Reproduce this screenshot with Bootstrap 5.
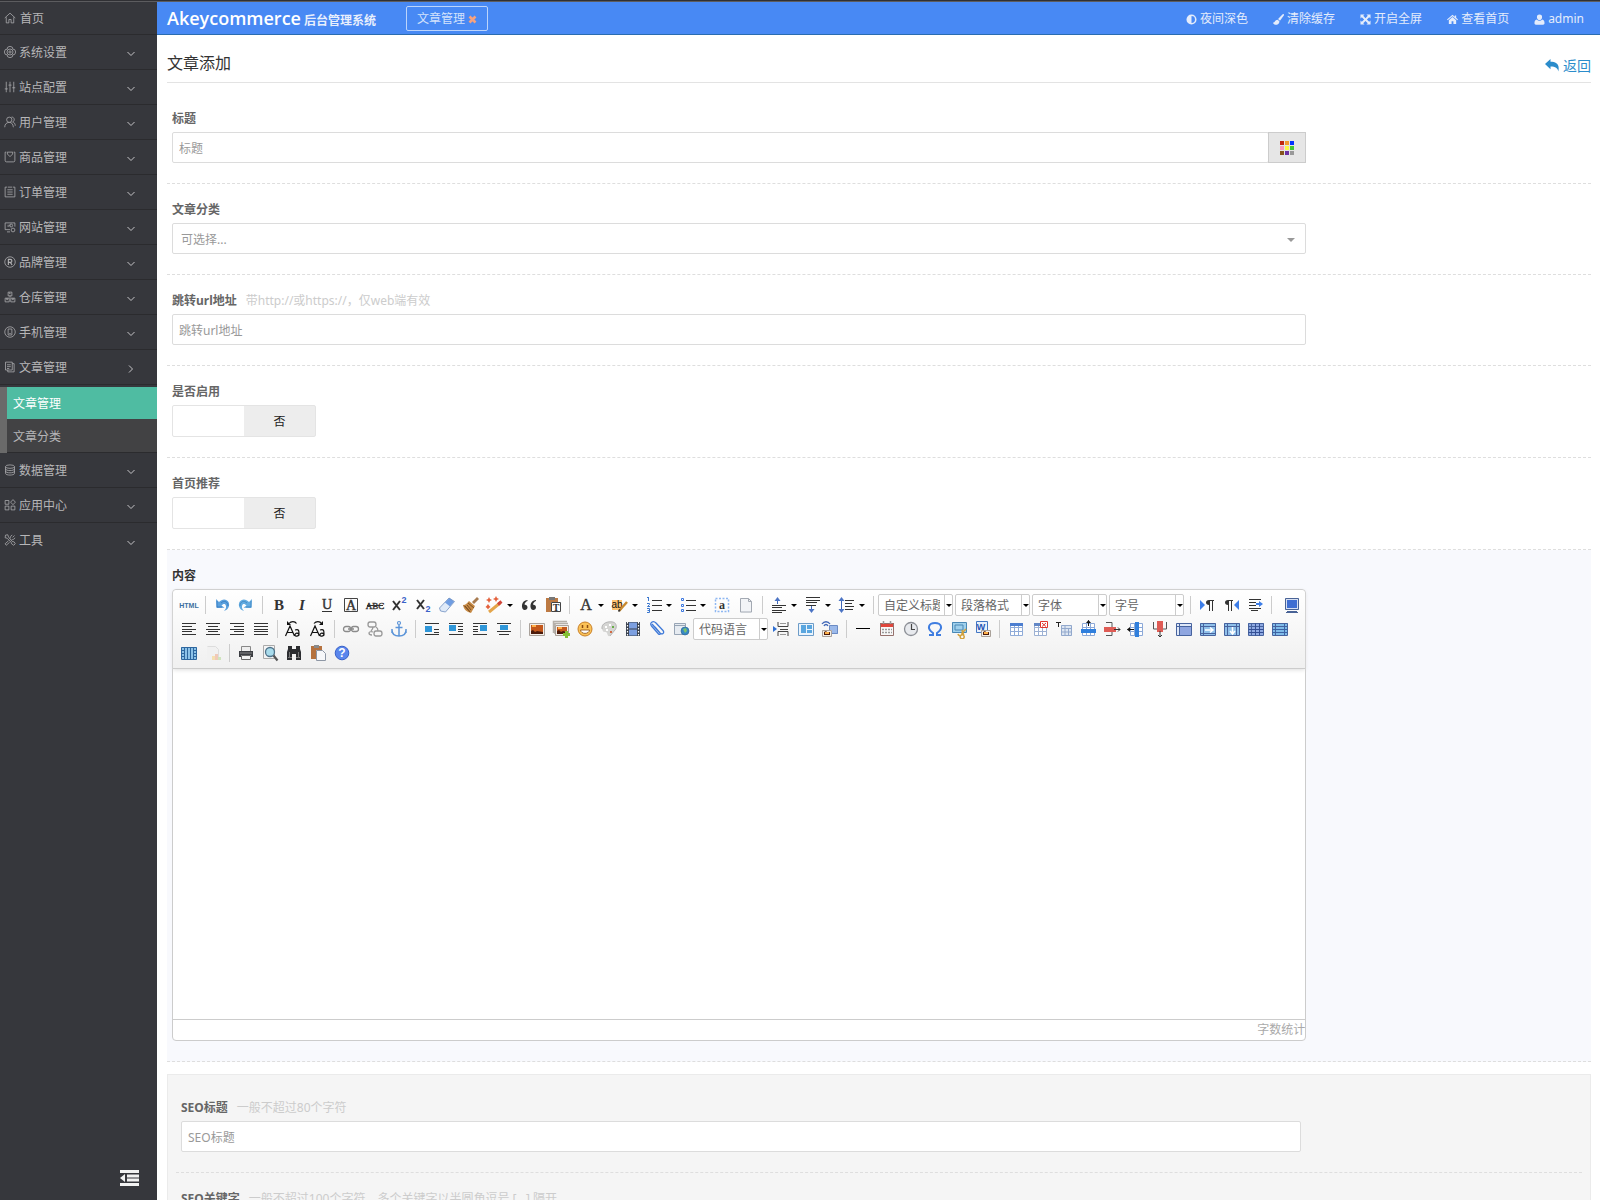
<!DOCTYPE html>
<html lang="zh-CN">
<head>
<meta charset="utf-8">
<meta name="viewport" content="width=device-width, initial-scale=1">
<title>Akeycommerce 后台管理系统</title>
<link href="https://cdn.jsdelivr.net/npm/bootstrap@5.3.0/dist/css/bootstrap.min.css" rel="stylesheet">
<style>
body { font: 12px/18px "Noto Sans", "Noto Sans CJK SC", sans-serif; color: #666; background: #fff; }
a { text-decoration: none; }
.shell { border-top: 1px solid #303034; }
.shell-body { border-top: 1px solid #5c5c5f; min-height: 0; }

.side { width: 157px; background: #36373c; padding-bottom: 12px; }
.side-link { height: 35px; padding: 1px 22px 0 4px; color: #b6b6b8; border-bottom: 1px solid #2b2b2e; gap: 3px; }
.side-link:hover { color: #fff; }
.side-home { height: 33px; gap: 4px; padding-top: 2px; }
.side-link svg { width: 12px; height: 12px; margin-bottom: 2px; fill: none; stroke: #b2b2b4; }
.side-link .chev { width: 8px; height: 8px; margin: 3px 0 0 auto; stroke: #c4c4c6; }
.side li:last-child > .side-link { border-bottom: 0; }
.side-sub { margin-top: 2px; border-left: 7px solid #6a6a6a; }
.side-sub a { height: 34px; padding: 2px 0 0 6px; color: #b6b6b8; background: #424244; border-bottom: 1px solid #2b2b2e; }
.side-sub a.on { height: 32px; background: #4fbca2; color: #fff; border: 0; }
.side-fold { padding: 0; margin-right: 18px; }

.top { height: 33px; background: #4889f4; border-bottom: 1px solid #2a6cb0; padding: 0 16px 0 10px; color: #e8effc; }
.brand-name { font-family: "Open Sans", "Noto Sans", sans-serif; font-size: 18px; font-weight: 600; color: #fff; }
.brand-sub { padding-top: 6px; margin-left: 3px; }
.tab-tag { height: 25px; border: 1px solid #bcd4fb; border-radius: 2px; color: #d3e2fc; padding: 2px 10px 0; margin-left: 30px; gap: 3px; background: none; }
.top-nav { gap: 25px; padding-top: 2px; }
.top-link { color: #e4ecfb; gap: 3px; }
.top-link svg { width: 11px; height: 11px; fill: currentColor; }

.page-main { padding: 0 9px 0 10px; overflow-y: auto; scrollbar-width: none; }
.page-head { height: 48px; border-bottom: 1px solid #e3e3e3; margin-bottom: 10px; }
.page-head h1 { font-size: 16px; line-height: 24px; color: #333; padding-top: 16px; }
.back-link { font-size: 14px; color: #2b8ccb; padding-top: 14px; gap: 4px; }
.field { border-bottom: 1px dashed #dedede; padding: 17px 0 20px; }
.field-in { width: 80%; padding-left: 5px; }
.field-label { font-weight: 700; color: #666; display: block; margin-bottom: 4px; }
.field-hint { font-weight: 400; color: #ccc; margin-left: 9px; }
.box { display: block; width: 100%; height: 31px; border: 1px solid #dcdcdc; border-radius: 2px; padding: 2px 6px 0; background: #fff; color: #999; font-size: 12px; }
.box::placeholder { color: #999; opacity: 1; }
.box-select { appearance: none; padding: 2px 8px 0; }
.arrow-host { position: relative; }
.box-arrow { position: absolute; right: 11px; top: 15px; border: 4px solid transparent; border-top-color: #999; border-bottom: 0; pointer-events: none; }
.swatch-btn { width: 38px; background: #e6e6e6; border: 1px solid #ccc; margin-left: -1px; flex: none; }
.toggle { width: 144px; height: 32px; border: 1px solid #e4e4e4; border-radius: 2px; background: linear-gradient(90deg, #fff 50%, #ededed 50%); color: #222; padding: 2px 0 0; }
.toggle span { width: 50%; }

.field-rich { background: #f8f9fd; }
.field-rich .field-label { color: #333; }
.ed { border: 1px solid #ccc; border-radius: 4px; background: #fff; }
.ed-bar { padding: 3px 1px 3px 4px; border-bottom: 1px solid #ccc; background: linear-gradient(#fff, #f0f0f0); border-radius: 4px 4px 0 0; box-shadow: 0 1px 4px #ddd; }
.ed-row { height: 24px; }
.ed-btn { width: 24px; height: 24px; padding: 2px; border: 0; background: none; display: block; flex: none; }
.ed-btn.drop { width: 34px; display: flex; align-items: center; }
.ed-btn svg { width: 20px; height: 20px; display: block; flex: none; }
.ed-btn.drop::after, .ed-sel::after { content: ""; border: 3px solid transparent; border-top-color: #000; border-bottom: 0; }
.ed-btn.drop::after { margin-left: 2px; }
.ed-sep { width: 1px; height: 18px; background: #ccc; margin: 0 4px; flex: none; }
.ed-sel { position: relative; width: 75px; height: 22px; margin-right: 2px; border: 1px solid #ccc; border-radius: 2px; background: #fff; flex: none; }
.ed-sel select { width: 66px; height: 20px; appearance: none; border: 0; border-right: 1px solid #ccc; background: none; color: #666; padding: 2px 4px 0 5px; display: block; }
.ed-sel::after { position: absolute; right: 0; top: 9px; pointer-events: none; }
.ed-text { display: block; width: 100%; height: 350px; border: 0; resize: none; outline: 0; background: none; }
.ed-foot { height: 21px; border-top: 1px solid #ccc; color: #aaa; line-height: 20px; }
.seo { margin-top: 12px; padding: 7px 8px; border: 1px solid #ebebeb; background: #f5f5f5; }
</style>
</head>
<body>
<div class="shell vh-100 d-flex flex-column overflow-hidden">
<div class="shell-body d-flex flex-grow-1">
  <aside class="side d-flex flex-column flex-shrink-0">
    <ul class="list-unstyled m-0" id="menu"></ul>
    <button class="side-fold btn border-0 mt-auto ms-auto" aria-label="收起菜单"><svg width="19" height="16" viewBox="0 0 19 16"><path fill="#f2f2f2" d="M0 0h19v3H0zM7 4.500h12v3H7zM7 8.500h12v3H7zM0 13h19v3H0zM5 4v8L0 8z"/></svg></button>
  </aside>
  <div class="d-flex flex-column flex-grow-1 overflow-hidden">
    <header class="top d-flex align-items-center flex-shrink-0">
      <span class="brand-name">Akeycommerce</span><b class="brand-sub">后台管理系统</b>
      <button class="tab-tag d-flex align-items-center">文章管理<svg width="9" height="9" viewBox="0 0 9 9"><path d="M1.500 1.500l6 6m0-6l-6 6" stroke="#f6a27f" stroke-width="2.600"/></svg></button>
      <nav class="top-nav d-flex ms-auto">
        <a class="top-link d-flex align-items-center" href="#"><svg viewBox="0 0 12 12"><path fill-rule="evenodd" d="M6 .5a5.500 5.500 0 100 11 5.500 5.500 0 000-11zM6 2.200v7.600a3.800 3.800 0 000-7.600z"/></svg>夜间深色</a>
        <a class="top-link d-flex align-items-center" href="#"><svg viewBox="0 0 12 12"><path d="M11.700.3c.6.6.2 1.400-.3 2L7.600 7.300 5.500 5.500 10 .7c.5-.5 1.200-.9 1.700-.4zM5 6.200l2 1.800c.1 2.500-2.300 4-4.500 3.800C1.200 11.600.4 10.600 0 9.200c2 .6 1.800-2.700 5-3z"/></svg>清除缓存</a>
        <a class="top-link d-flex align-items-center" href="#"><svg viewBox="0 0 12 12"><path d="M.5.500H5L3.500 2 6 4.500 8.500 2 7 .500h4.500V5L10 3.500 7.500 6 10 8.500 11.500 7v4.500H7L8.500 10 6 7.500 3.500 10 5 11.500H.500V7L2 8.500 4.500 6 2 3.500.500 5z"/></svg>开启全屏</a>
        <a class="top-link d-flex align-items-center" href="#"><svg viewBox="0 0 12 12"><path d="M6 .8l2.500 2.100V1.500H10v2.700l2 1.700-.7.800L6 2.400.7 6.700 0 5.900zM6 3.400l4 3.300V11H7V8H5v3H2V6.700z"/></svg>查看首页</a>
        <a class="top-link d-flex align-items-center" href="#"><svg viewBox="0 0 12 12"><path d="M6 .5a2.800 2.800 0 012.800 3C8.800 5.400 7.500 6.700 6 6.700S3.200 5.400 3.200 3.500A2.800 2.800 0 016 .5zM3 6c1.600 2 4.400 2 6 0 1.800.3 2.500 2 2.500 4 0 1-.7 1.600-1.500 1.600H2c-.8 0-1.500-.6-1.500-1.600 0-2 .7-3.700 2.500-4z"/></svg>admin</a>
      </nav>
    </header>
    <main class="page-main flex-grow-1">
      <div class="page-head d-flex justify-content-between">
        <h1 class="m-0 fw-normal">文章添加</h1>
        <a class="back-link d-flex align-items-center" href="#"><svg width="14" height="13" viewBox="0 0 14 13"><path fill="#2b8ccb" d="M5.500 0v2.800C11 2.800 15 5 13.300 12.500 12.800 9 10.500 7.500 5.500 7.500v2.800L0 5z"/></svg>返回</a>
      </div>
      <form>
        <div class="field"><div class="field-in">
          <label class="field-label" for="f-title">标题</label>
          <div class="d-flex"><input class="box" id="f-title" placeholder="标题">
            <button type="button" class="swatch-btn d-flex align-items-center justify-content-center p-0" aria-label="标题颜色"><svg width="14" height="14" viewBox="0 0 14 14" shape-rendering="crispEdges"><path fill="#c1270f" d="M0 0h4v4H0z"/><path fill="#f39a2e" d="M5 0h4v4H5z"/><path fill="#0433ff" d="M10 0h4v4h-4z"/><path fill="#f99bbd" d="M0 5h4v4H0z"/><path fill="#fbfb44" d="M5 5h4v4H5z"/><path fill="#45c830" d="M10 5h4v4h-4z"/><path fill="#86551d" d="M0 10h4v4H0z"/><path fill="#6c32a5" d="M5 10h4v4H5z"/><path fill="#999" d="M10 10h4v4h-4z"/></svg></button>
          </div>
        </div></div>
        <div class="field"><div class="field-in">
          <label class="field-label" for="f-cat">文章分类</label>
          <div class="arrow-host"><select class="box box-select" id="f-cat"><option>可选择...</option></select><span class="box-arrow"></span></div>
        </div></div>
        <div class="field"><div class="field-in">
          <label class="field-label" for="f-url">跳转url地址<span class="field-hint">带http://或https://，仅web端有效</span></label>
          <input class="box" id="f-url" placeholder="跳转url地址">
        </div></div>
        <div class="field"><div class="field-in">
          <label class="field-label" for="f-on">是否启用</label>
          <button type="button" id="f-on" class="toggle d-flex align-items-center justify-content-end"><span>否</span></button>
        </div></div>
        <div class="field"><div class="field-in">
          <label class="field-label" for="f-home">首页推荐</label>
          <button type="button" id="f-home" class="toggle d-flex align-items-center justify-content-end"><span>否</span></button>
        </div></div>
        <div class="field field-rich"><div class="field-in">
          <label class="field-label" for="f-body">内容</label>
          <div class="ed">
            <div class="ed-bar" id="edbar"></div>
            <textarea class="ed-text" id="f-body"></textarea>
            <div class="ed-foot text-end">字数统计</div>
          </div>
        </div></div>
        <div class="seo">
          <div class="field"><div class="field-in">
            <label class="field-label" for="f-st">SEO标题<span class="field-hint">一般不超过80个字符</span></label>
            <input class="box" id="f-st" placeholder="SEO标题">
          </div></div>
          <div class="field"><div class="field-in">
            <label class="field-label" for="f-sk">SEO关键字<span class="field-hint">一般不超过100个字符，多个关键字以半圆角逗号 [ , ] 隔开</span></label>
            <input class="box" id="f-sk" placeholder="SEO关键字">
          </div></div>
        </div>
      </form>
    </main>
  </div>
</div>
</div>

<script src="https://cdn.jsdelivr.net/npm/bootstrap@5.3.0/dist/js/bootstrap.bundle.min.js"></script>
<script>
/* Side menu: name, icon drawing on a 16-unit grid, optional children */
const menu = [
  ['首页', '<path d="M1 8l7-6.500L15 8M3 7v7.500h3.500V10h3v4.500H13V7"/>'],
  ['系统设置', '<path d="M5 1.500l3-1 3 1 .8 2.700 2.700.8 1 3-1 3-2.700.8L11 14.500l-3 1-3-1-.8-2.700-2.700-.8-1-3 1-3 2.700-.8z"/><circle cx="8" cy="8" r="4"/><circle cx="8" cy="8" r="1.500"/>'],
  ['站点配置', '<path d="M3 1v9M3 13v2M8 1v2M8 6v9M13 1v7M13 11v4M1 10.500h4M6 5.500h4M11 9h4M3 10v3M8 3v3M13 8v3"/>'],
  ['用户管理', '<circle cx="7" cy="5" r="3.500"/><path d="M1 15c0-4 2-6 5.500-6.500M7 8.500c3.500 0 5 2.500 5.500 6.500M10 1.500c4-.5 5 5 1.500 6.500 2 .5 3.500 2 3.500 5"/>'],
  ['商品管理', '<path d="M3 1.500H1.500v11q0 2 2 2h9q2 0 2-2v-11H13M4.500 1v3l3.500 3.500L11.500 4V1M5 1.500h6"/>'],
  ['订单管理', '<path d="M4 1.500H1.500v13h13v-13H12M5 1.500h6M4.500 5h7M4.500 8h7M4.500 11h7"/>'],
  ['网站管理', '<path d="M8 11.500H1.500v-9h13v5M4 14.500h4M5.500 5v3M8 5v2"/><circle cx="9.500" cy="6" r="2"/><circle cx="12" cy="12" r="2.500"/>'],
  ['品牌管理', '<circle cx="8" cy="8" r="7"/><path stroke-width="1.500" d="M5.800 12V4.500h2.700q2 0 2 2t-2 2H6M8.500 8.500l2.300 3.500"/>'],
  ['仓库管理', '<path d="M5.500 1.500h5v5h-5zM1.500 9.500h5.500v5H1.500zM9 9.500h5.500v5H9zM8 6v3M3.500 9.500v2h1.500v-2M11 9.500v2h1.500v-2M7.300 2v1.500h1.500"/>'],
  ['手机管理', '<circle cx="8" cy="8" r="7"/><path d="M5.500 4h5v8h-5zM7 10h2"/>'],
  ['文章管理', '<path d="M2 1.500h9v10.500H2zM11 3.500h2.500v11H5V12M4 5h5M4 7.500h5M4 10h3"/>', ['文章管理', '文章分类']],
  ['数据管理', '<ellipse cx="8" cy="3.500" rx="6" ry="2.300"/><path d="M2 3.500v9c0 3 12 3 12 0v-9M2 6.500c0 3 12 3 12 0M2 9.500c0 3 12 3 12 0"/>'],
  ['应用中心', '<path d="M1.500 2h5v5h-5zM1.500 9.500h5v5h-5zM9.500 9.500h5v5h-5zM12 .8L15.200 4.200 12 7.600 8.800 4.200z"/>'],
  ['工具', '<path d="M2 1.500l3-.5 1 3 5 6 2.500.5L15 13l-2 2-3-2-.5-2L4 5.500 1.500 5zM14 2l-2.500 2.500M11 1.500c-3 1-2 3-3 4.500M14.500 5c-1 3-3 2-4.500 3M6 9l-4.500 4 1.500 2 4.500-4"/>']
];
document.getElementById('menu').innerHTML = menu.map(([name, art, kids], i) =>
  `<li><a href="#" class="side-link d-flex align-items-center ${i ? '' : 'side-home'}"><svg viewBox="0 0 16 16">${art}</svg>${name}` +
  (i ? `<svg class="chev" viewBox="0 0 8 8"><path d="${kids ? 'M2 .5L5.500 4 2 7.500' : 'M.5 2L4 5.500 7.500 2'}"/></svg>` : '') + '</a>' +
  (kids ? '<div class="side-sub">' + kids.map((k, n) => `<a href="#" class="d-flex align-items-center ${n ? '' : 'on'}">${k}</a>`).join('') + '</div>' : '') + '</li>').join('');

/* Editor icons, drawn on a 20-unit grid */
const P = (d, c = '#333', w = 1) => `<path fill="none" stroke="${c}" stroke-width="${w}" d="${d}"/>`;
const F = (d, c = '#333') => `<path fill="${c}" d="${d}"/>`;
const T = (s, x, y, size, extra = '', c = '#333') => `<text x="${x}" y="${y}" font-size="${size}" fill="${c}" text-anchor="middle" ${extra}>${s}</text>`;
const SERIF = 'font-family="Liberation Serif, serif" font-weight="700"';
const THIN = 'font-family="Liberation Serif, serif" stroke="#333" stroke-width=".4"';
const SANS = 'font-family="Liberation Sans, sans-serif" font-weight="700"';
const bars = a => P(a.map(([y, x1, x2]) => `M${x1} ${y}.5H${x2}`).join(''));
const grid = c => F('M4 5h12v11H4z', '#fff') + P('M4.500 4.500h12v12h-12zM4.500 8.500h12M4.500 12.500h12M8.500 4.500v12M12.500 4.500v12', c);
const frame = f => F('M2 4h16v12H2z', f) + P('M2.500 4.500h15v12h-15zM5.500 4.500v12M2.500 7.500h15', '#47639e');
const photo = (x, y, w, h) => F(`M${x} ${y}h${w}v${h}h-${w}z`, '#f4efe9') + F(`M${x + 2} ${y + 2}h${w - 4}v${h - 4}h-${w - 4}z`, '#c4581c') + F(`M${x + 2} ${y + h - 2}v-3l2-1 2 2 2-1 ${w - 10} 1v2z`, '#4b1a0a') + F(`M${x + 3} ${y + 2}h4v2h-4z`, '#ffb14a') + P(`M${x}.5 ${y}.5h${w - 1}v${h - 1}h-${w - 1}z`, '#a9a19a');
const art = {
  html: T('HTML', 10, 13, 7, SANS, '#3b6ea0'),
  undo: F('M4 4l.500 9 8-.2-3-2.300c1.500-2 4-2.500 4.500.500.3 2-.5 3.500-2 5 5-1.500 6-6 4.500-9-2-3.500-6.500-3.500-9.500 0z', '#5ba1dd') + P('M5 6v6h5M9 8c3-3 7-1.500 7 3', '#2f74bb', .7),
  redo: F('M16 4l-.5 9-8-.2 3-2.300c-1.500-2-4-2.500-4.500.500-.3 2 .5 3.500 2 5-5-1.500-6-6-4.500-9 2-3.500 6.500-3.500 9.500 0z', '#62abe0') + P('M15 6v6h-5M11 8C8 5 4 6.500 4 11', '#3b80bd', .7),
  bold: T('B', 10, 15, 15, SERIF), ital: T('I', 9, 15, 15, SERIF + ' font-style="italic"'),
  under: T('U', 10, 14, 14, THIN) + P('M5 16.500h10'),
  boxed: T('A', 10, 15, 14, THIN) + P('M3.500 3.500h13v13h-13z', '#444'),
  strike: T('ABC', 10, 14, 9, THIN) + P('M2 10.500h16'),
  sup: P('M4 6l7 9M11 6l-7 9', '#333', 2) + T('2', 15, 8, 9, SANS, '#3a62c8'),
  sub: P('M4 5l7 9M11 5l-7 9', '#333', 2) + T('2', 15, 17, 9, SANS, '#3a62c8'),
  eraser: F('M2.500 13L12 3l5.500 3.500L8.500 17l-5-1z', '#dfeaf8') + F('M8 7.500L12.500 3l4.500 3.500-4 5z', '#6f9de2') + P('M2.500 13L12 3l5.500 3.500L8.500 17l-5-1z', '#6f8fc0', .8),
  broom: F('M16 2l2 2-5 5-2-2z', '#a77b50') + F('M8 6l6 5-4 7C6 17 3 15 2 10c3 0 4-2 6-4z', '#c78a45') + P('M7 8l6 5M4 11l5 6M6 10l4 5M3 10.500l5 5', '#744a20', .9),
  wand: P('M4 17L15 8', '#e4a54a', 3) + P('M13 9.500l3.500-3', '#d0453b', 3) + F('M4 2l1 2 2 1-2 1-1 2-1-2-2-1 2-1zM11 1l1 2 2 1-2 1-1 2-1-2-2-1 2-1zM3 9l1 1.500L5.500 12 4 13l-1 1.500L2 13 .5 12 2 10.500z', '#e4613c'),
  quote: F('M8.500 5C2 5 1.500 14.500 5.500 15c3.500.3 4.500-5 0-5.500C5.500 8 7 6.500 8.500 6zM17 5c-6.500 0-7 9.500-3 10 3.500.3 4.500-5 0-5.500C14 8 15.500 6.500 17 6z'),
  pasteT: F('M3 3h12v14H3z', '#bd7a43') + F('M6 2h6v3H6z', '#777') + F('M8 7h10v10H8z', '#fff') + P('M8.500 7.500h9v9h-9z', '#444') + T('T', 13, 16, 10, SERIF),
  fore: T('A', 10, 15, 16, THIN),
  back: F('M2 5h10v10H2z', '#ffc370') + T('ab', 7, 13, 10, 'font-family="Liberation Sans, sans-serif"', '#111') + P('M9 16l8-9', '#c98a2e', 2.500) + P('M8.500 16.500l1.500-2', '#333', 1.500),
  ol: P('M8 5.500h10M8 10.500h10M8 15.500h10') + P('M4.500 2v4M3 2.500h2M3 8.500h2.500v1L3.500 11.500h2.500M3 13.500h2.500v4H3M3.500 15.500H5', '#3c78cf'),
  ul: P('M8 5.500h10M8 10.500h10M8 15.500h10') + P('M3.500 3.500h2v2h-2zM3.500 9.500h2v2h-2zM3.500 14.500h2v2h-2z', '#3c78e0'),
  selA: P('M3.500 3.500h13v13h-13z', '#8fb8f2', 1.500).replace('/>', ' stroke-dasharray="2 1.500"/>') + T('a', 10, 14, 12, SERIF),
  blank: F('M4 3h9l3 3v12H4z', '#f2f4f7') + P('M4.500 3.500h8l3 3v10.500h-11zM12.500 3.500v3h3', '#a3a9b2'),
  spTop: bars([[10, 3, 17], [12, 3, 13], [15, 3, 17], [17, 3, 13]]) + P('M8.500 3v6', '#3f66b5') + F('M5.500 6l3-4 3 4z', '#4b74c4'),
  spBot: bars([[2, 3, 17], [5, 3, 17], [7, 3, 14], [10, 3, 13]]) + P('M8.500 11v5', '#3f66b5') + F('M5.500 14l3 4 3-4z', '#4b74c4'),
  lineH: bars([[5, 8, 17], [8, 8, 15], [11, 8, 17], [14, 8, 16]]) + P('M4.500 4v12', '#3f66b5') + F('M1.500 6l3-4 3 4zM1.500 14l3 4 3-4z', '#4b74c4'),
  ltr: F('M3 5l5 5-5 5z', '#3c7de8') + F('M17 5H12c-4 0-4 5 0 5v6h1V6h2v10h1V6h1z'),
  rtl: F('M18 5l-5 5 5 5z', '#3c7de8') + F('M12 5H7c-4 0-4 5 0 5v6h1V6h2v10h1V6h1z'),
  indent: bars([[4, 4, 16], [7, 4, 11], [10, 4, 11], [13, 4, 16], [15, 6, 13]]) + P('M11 9h5', '#3c7de8', 2) + F('M14 6l4 3-4 3z', '#3c7de8'),
  screen: F('M3 3h14v12H3z', '#d7e0f3') + F('M5 5h10v8H5z', '#3f6ed2') + P('M3.500 3.500h13v11h-13zM5 16.500h10M4 17.500h12', '#496396'),
  al: bars([[4, 3, 17], [7, 3, 13], [10, 3, 17], [12, 3, 13], [15, 3, 17]]),
  ac: bars([[4, 3, 17], [7, 5, 15], [10, 3, 17], [12, 5, 15], [15, 3, 17]]),
  ar: bars([[4, 3, 17], [7, 7, 17], [10, 3, 17], [12, 7, 17], [15, 3, 17]]),
  aj: bars([[4, 3, 17], [7, 3, 17], [10, 3, 17], [12, 3, 17], [15, 3, 17]]),
  upper: P('M1.500 17L6 7l4.500 10M3 13.500h6M11 11c4-1 4 0 4 5.500 0-3-4-3-4-.5 0 2 4 1 4-.500M5 4.500c2-2.500 6-2.500 7.500 0', '#111', 1.200) + F('M3 2v4h4z', '#111'),
  lower: P('M2.500 17L7 7l4.500 10M4 13.500h6M12 11c4-1 4 0 4 5.500 0-3-4-3-4-.5 0 2 4 1 4-.500M6 4.500c2-2.500 6-2.500 7.500 0', '#111', 1.200) + F('M15 2v4h-4z', '#111'),
  link: P('M7.500 7.500H5a2.500 2.500 0 000 5h2.500q2 0 2-2.500t-2-2.500zM12.500 7.500H15a2.500 2.500 0 010 5h-2.500q-2 0-2-2.500t2-2.500zM7 10h6', '#8b8b8b', 1.300),
  unlink: P('M5 3h4q2 0 2 2.500T9 8H5Q3 8 3 5.500T5 3zM11 12h4q2 0 2 2.500T15 17h-4q-2 0-2-2.500t2-2.500zM8 8c0 2-1 3-2 4M11 8c2 1 2 2 2 4M8 13c-2-1-4 0-4 1s1 2 3 2', '#999', 1.300),
  anchor: P('M10 6v11M6.500 8.500h7M3 11c0 4 3 6 7 6s7-2 7-6M3 10v4M17 10v4', '#5b94d8', 1.500) + P('M8.500 4a1.500 1.500 0 103 0 1.500 1.500 0 10-3 0z', '#5b94d8', 1.200),
  im1: F('M3 7h7v6H3z', '#2f96d8') + bars([[4, 3, 17], [10, 12, 17], [13, 12, 17], [15, 3, 17]]),
  im2: F('M3 6h7v6H3z', '#2f96d8') + bars([[4, 3, 17], [7, 12, 17], [10, 12, 17], [12, 12, 17], [15, 3, 17]]),
  im3: F('M10 6h7v6h-7z', '#2f96d8') + bars([[4, 3, 17], [7, 3, 8], [10, 3, 8], [12, 3, 8], [15, 3, 17]]),
  im4: F('M6 6h8v5H6z', '#2f96d8') + bars([[4, 3, 17], [12, 3, 17], [15, 5, 15]]),
  pic: photo(2, 4, 16, 13), pics: P('M2.500 14V2.500H16M4 15V4.500h13', '#b5b0aa', 1.500) + photo(4, 6, 14, 11) + P('M15.500 12v7M12 15.500h7', '#84bf35', 3),
  smile: '<circle cx="10" cy="10" r="7" fill="#fbc257" stroke="#c98027"/>' + P('M7.500 6v3M12.500 6v3', '#8a4b12', 1.500) + F('M5.500 11h9c-.5 4.500-8.500 4.500-9 0z', '#fff') + P('M5.500 11h9c-.5 4.500-8.500 4.500-9 0z', '#8a4b12', .8),
  scrawl: F('M3 10C2 4 9 2 14 3c4 1 4 6 2 8l-5 6c-3 1-2-3-4-4-2 0-3 0-4-3z', '#d5d5d3') + P('M3 10C2 4 9 2 14 3c4 1 4 6 2 8l-5 6', '#aaa', .8) + F('M6 7h2v2H6zM10 5h2v2h-2zM7 10h2v2H7z', '#fff') + F('M13 7h2v2h-2z', '#67ad47') + F('M11 12h2v2h-2z', '#d26a43'),
  film: F('M3 3h14v14H3z', '#39414e') + F('M6 3.500h8v6H6zM6 10.500h8v6H6z', '#7c9fe0') + P('M4.500 3v14M15.500 3v14', '#fff', 1.200).replace('/>', ' stroke-dasharray="1.500 1.500"/>'),
  clip: P('M5 5l8 9c2 2 5 0 3-2.500L9 4C6 1 2 4 4.500 7l7 8c1 1 2.500 0 1.500-1L8 8', '#3e79d8', 1.300),
  mapi: F('M3 4h12v12H3z', '#e6ebf1') + P('M3.500 4.500h11v11h-11zM3.500 6.500h11', '#98a5b5') + '<circle cx="14" cy="12" r="4" fill="#3888c4" stroke="#29608f" stroke-width=".6"/>' + F('M12 10l3-1 1 3-2 2z', '#7bc46b'),
  pbreak: P('M6 3v4.500h10V3M6 17v-4.500h10V17M8 10.500h8', '#444') + P('M8 4.500h6M8 15.500h6', '#999') + F('M1 7l4 3-4 3z', '#2f6fd2'),
  tmpl: F('M3 4h15v12H3z', '#eaf4fd') + F('M5 6h5v8H5zM11 6h5v4h-5zM11 11h5v3h-5z', '#5aa6df') + P('M2.500 4.500h15v12h-15z', '#6d9cc8'),
  bgr: F('M9 7h9v8H9z', '#9bb9ea') + P('M9.500 6.500h8v8h-8z', '#6b8bc4') + P('M2 5c2-3 6-3 8 0M4 7c1-2 3-2 4 0', '#4269b8', 1.300) + photo(2, 11, 10, 7),
  hr: P('M3 9.500h14', '#000'),
  cal: F('M3 4h14v13H3z', '#f8f8f8') + F('M3 4h14v4H3z', '#e0463c') + P('M3.500 4.500h13v12h-13z', '#96716d') + P('M5 10.500h10M5 13.500h10', '#9a9a9a', 1.500).replace('/>', ' stroke-dasharray="2 1"/>') + P('M6.500 2v3M13.500 2v3', '#999', 1.500),
  clock: '<circle cx="10" cy="10" r="6.500" fill="#e8eaee" stroke="#8c8f96" stroke-width="1.300"/>' + P('M10.500 5v5.500H14', '#444', 1.200),
  omega: P('M4 16h4v-2C1 9 4 4 10 4s9 5 2 10v2h4', '#3f7de0', 2),
  snap: F('M3 3h14v11H3z', '#9fd0ec') + P('M3.500 3.500h14v10h-14zM6 6h8v5H6z', '#4a88b5') + P('M9 15a2 2 0 104-1l4-4M14 16a2 2 0 101 1l-2-6', '#d2a13b', 1.500),
  word: F('M3 2h12v12H3z', '#e8f0fb') + P('M3.500 2.500h11v11h-11z', '#4377c4') + T('W', 8, 11, 9, SANS, '#1f55b5') + photo(8, 11, 10, 7),
  tbl: grid('#8fabd8') + F('M4 4h13v3H4z', '#4c7ed0'),
  tdel: grid('#9db1d3') + F('M4 4h13v3H4z', '#6287c6') + F('M10 2h8v7h-8z', '#fff') + P('M10.500 2.500h7v6h-7zM12 4l4 3.500M16 4l-4 3.500', '#e0352c'),
  tt: F('M7 6h11v11H7z', '#dde6f2') + P('M7.500 6.500h10v10h-10zM7.500 9.500h10M7.500 13h10M11 6.500v10M14.500 9v7.500', '#92a8cc') + P('M2 3.500h5M4.500 3v5', '#222'),
  rowi: grid('#8ca9d8') + F('M3 10h15v4H3z', '#2f7fdd') + P('M10.500 7V1.500', '#111') + F('M8 4l2.500-3L13 4z', '#111'),
  rowd: P('M4 3.500h6v13H4', '#555') + F('M2 8h12v5H2z', '#df5c55') + P('M12 10.500h6M16 8.500l2 2-2 2', '#333'),
  coli: grid('#8ca9d8') + F('M9 3h4v15H9z', '#2f7fdd') + P('M8 10.500H1.500', '#111') + F('M4 8l-3 2.500L4 13z', '#111'),
  cold: P('M3.500 3v7h13V3', '#555') + F('M7 2h6v11H7z', '#df5c55') + P('M10 12v6M8 16l2 2 2-2', '#333'),
  mer: frame('#dfe8f8') + F('M6 8h11v8H6z', '#8fa6e0'),
  mr: frame('#8fc0ea') + P('M7 11h8M12 8.500l3 2.500-3 2.500', '#fff', 1.500) + P('M2.500 14.500h15', '#47639e'),
  md: frame('#8fc0ea') + P('M10.500 8v7M8 12l2.500 3L13 12', '#fff', 1.500) + P('M14.500 4.500v12', '#47639e'),
  sp: frame('#8ea9e2') + P('M9.500 4.500v12M13.500 4.500v12M2.500 10.500h15M2.500 13.500h15', '#344f95'),
  sr: frame('#7fbbe9') + P('M2.500 10.500h15M2.500 13.500h15M14.500 4.500v12', '#3c64a5'),
  sc: F('M2 4h16v12H2z', '#8cc2e8') + P('M2.500 4.500h15v12h-15zM5.500 4.500v12M8.500 4.500v12M11.500 4.500v12M14.500 4.500v12', '#2e679f') + P('M2 7.500h3M2 10.500h3M2 13.500h3M15 7.500h3M15 10.500h3M15 13.500h3', '#2e679f'),
  chart: F('M4 3h9l3 3v11H4z', '#f1f1f1') + P('M4.500 3.500h8l3 3v10', '#ddd') + F('M9 13h3v4H9z', '#f5dfb0') + F('M12 11h3v6h-3z', '#f0c9b8') + F('M15 14h3v3h-3z', '#cfe5bd'),
  print: F('M5 3h10v6H5z', '#eee') + P('M5.500 3.500h9v5h-9z', '#888') + F('M3 8h14v6H3z', '#3b3d42') + F('M5 12h10v5H5z', '#f3f3f3') + P('M5.500 12.500h9v4h-9z', '#666') + P('M4 10h12', '#888'),
  prev: F('M3 3h11v13H3z', '#f4f4f4') + P('M3.500 2.500h11v13h-11z', '#aaa') + '<circle cx="10" cy="9" r="4.500" fill="#a9dcec" stroke="#50738a" stroke-width="1.300"/>' + P('M13.500 12.500l4 5', '#555', 2.200),
  find: F('M4 3h4v3h4V3h4v3l1 3v8h-5v-6H8v6H3V9l1-3z', '#2c2d30') + P('M5.500 9v6M14.500 9v6M4 14.500h4M12 14.500h4', '#777'),
  paste: F('M3 3h11v13H3z', '#b5723f') + F('M6 2h5v3H6z', '#8a8a8a') + F('M8 7h7l3 3v8H8z', '#f7f8fa') + P('M8.500 7.500h6l3 3v7h-9z', '#8e97a5'),
  help: '<circle cx="10" cy="10" r="6.800" fill="#5a86ec" stroke="#3861c9"/>' + T('?', 10, 14, 12, SANS, '#fff')
};
/* "|" separator, "=text" drop-down list, trailing "+" split button, trailing ">" pushed to the right end */
const rows = [
  'html | undo redo | bold ital under boxed strike sup sub eraser broom wand+ quote pasteT | fore+ back+ ol+ ul+ selA blank | spTop+ spBot+ lineH+ | =自定义标题 =段落格式 =字体 =字号 | ltr rtl indent | screen>',
  'al ac ar aj | upper lower | link unlink anchor | im1 im2 im3 im4 | pic pics smile scrawl film clip mapi =代码语言 pbreak tmpl bgr | hr cal clock omega snap word | tbl tdel tt rowi rowd coli cold mer mr md sp sr',
  'sc chart | print prev find paste help'
];
document.getElementById('edbar').innerHTML = rows.map(r => '<div class="ed-row d-flex align-items-center">' + r.split(' ').map(k => {
  if (k === '|') return '<span class="ed-sep"></span>';
  if (k[0] === '=') return `<span class="ed-sel"><select aria-label="${k.slice(1)}"><option>${k.slice(1)}</option></select></span>`;
  const id = k.replace(/[+>]/, '');
  const mode = k.endsWith('+') ? 'drop' : k.endsWith('>') ? 'ms-auto' : '';
  return `<button type="button" class="ed-btn ${mode}" aria-label="${id}"><svg viewBox="0 0 20 20">${art[id]}</svg></button>`;
}).join('') + '</div>').join('');
</script>
</body>
</html>
